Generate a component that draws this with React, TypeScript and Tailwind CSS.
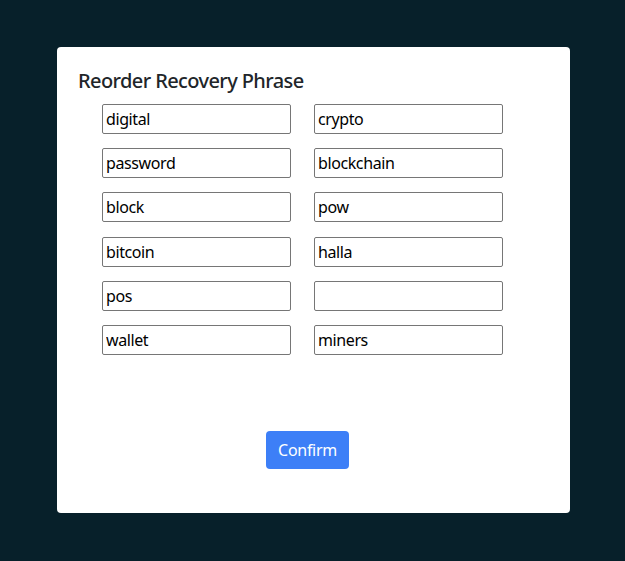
import React from "react";

const left = ["digital", "password", "block", "bitcoin", "pos", "wallet"];
const right = ["crypto", "blockchain", "pow", "halla", "", "miners"];

export default function App() {
  const words: string[] = [];
  for (let i = 0; i < 6; i++) {
    words.push(left[i], right[i]);
  }
  return (
    <div className="w-[625px] h-[561px] bg-[#07202a] pt-[47px] pl-[57px]" style={{ fontFamily: '"Noto Sans", "Open Sans", sans-serif' }}>
      <div className="w-[513px] h-[466px] bg-white rounded-[4px] flex flex-col pt-[22px] pl-[21px]">
        <h5 className="text-[20px] leading-[24px] font-medium text-[#212529] tracking-[-0.6px]">Reorder Recovery Phrase</h5>
        <div className="grid grid-cols-[189px_189px] gap-x-[23px] gap-y-[14.2px] mt-[11px] ml-[24px]">
          {words.map((w, i) => (
            <input
              key={i}
              defaultValue={w}
              className="h-[30px] w-[189px] border border-[#767676] rounded-[2px] px-[3px] text-[16px] tracking-[-0.4px] text-black outline-none"
            />
          ))}
        </div>
        <div className="flex mt-[76px] ml-[188px]">
          <button className="h-[38px] w-[83px] rounded-[4px] bg-[#3d7ff7] text-white text-[16px] leading-[24px] tracking-[-0.3px]">Confirm</button>
        </div>
      </div>
    </div>
  );
}
